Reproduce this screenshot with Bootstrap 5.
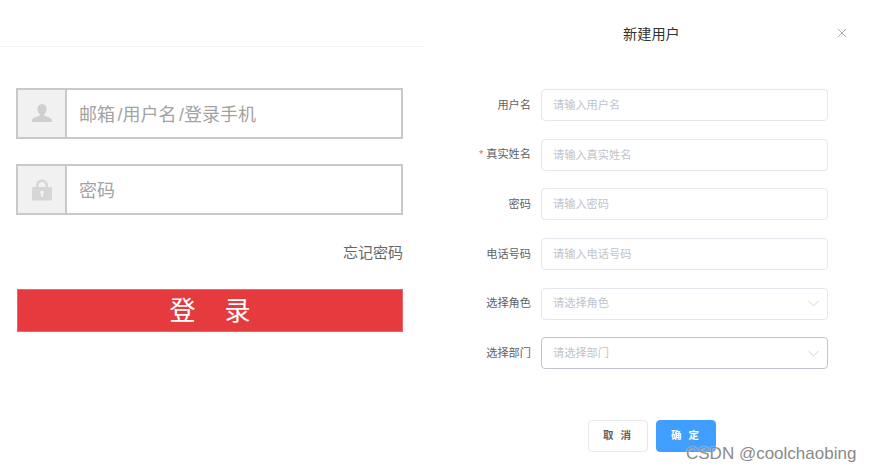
<!DOCTYPE html>
<html lang="zh-CN">
<head>
  <meta charset="UTF-8">
  <title>登录 / 新建用户</title>
  <link href="https://cdn.jsdelivr.net/npm/bootstrap@5.3.3/dist/css/bootstrap.min.css" rel="stylesheet">
  <style>
    html, body { height: 473px; overflow: hidden; }
    body { background: #fff; font-family: "Liberation Sans", "Noto Sans CJK SC", sans-serif; }
    .shot { height: 473px; }
    .login-side { width: 424px; flex: none; }
    .login-top { height: 47px; border-bottom: 1px solid #f4f4f4; }
    .login-form { padding: 41px 21px 0 16px; }
    .login-group { height: 51px; margin-bottom: 25px; border: 2px solid #c9c9c9; }
    .login-ico { width: 49px; flex: none; background: #f1f1f1; border-right: 2px solid #c9c9c9; }
    .login-group .form-control { border: 0; border-radius: 0; padding: 3px 12px 0 12px; font-size: 18px; word-spacing: -2.5px; box-shadow: none; }
    .login-group .form-control::placeholder { color: #a3a3a3; }
    .forgot { font-size: 15px; line-height: 22px; color: #666; padding-top: 2px; }
    .login-btn { display: block; width: 386px; height: 43px; margin: 25px 0 0 1px; padding: 0; background: #e53a3e; border: 1px solid #ea6468; border-radius: 0; color: #fff; font-size: 26px; line-height: 40px; word-spacing: 22px; }
    .login-btn:hover { background: #e53a3e; color: #fff; }

    .dialog-side { position: relative; }
    .dialog-title { height: 89px; padding-left: 199px; padding-top: 23px; font-size: 14.2px; line-height: 22px; color: #303133; }
    .dialog-close { position: absolute; left: 413px; top: 28px; width: 10px; height: 10px; padding: 0; border: 0; background: none; display: block; }
    .user-row { height: 32px; margin-bottom: 17.7px; padding-left: 41px; }
    .user-label { width: 66px; flex: none; padding-right: 0; text-align: right; font-size: 11.2px; color: #606266; margin-right: 10px; }
    .req { color: #f56c6c; margin-right: 3px; }
    .user-row .form-control, .user-row .form-select { width: 287px; flex: none; height: 32px; min-height: 0; padding: 0 11px; font-size: 11.2px; color: #c0c4cc; border: 1px solid #e4e7ed; border-radius: 4px; box-shadow: none; }
    .user-row .form-control::placeholder { color: #c0c4cc; }
    .user-row .form-select { background-image: url("data:image/svg+xml,%3csvg xmlns='http://www.w3.org/2000/svg' viewBox='0 0 10 6'%3e%3cpath fill='none' stroke='%23c0c4cc' stroke-width='.7' d='M.5.7 5 5.2 9.500.7'/%3e%3c/svg%3e"); background-size: 11px 7px; background-position: right 8px center; }
    .user-row .picked { border-color: #c0c4cc; }
    .dialog-foot { padding: 33px 0 0 164px; gap: 8px; }
    .foot-btn { width: 60px; height: 32px; padding: 0; font-size: 10.5px; font-weight: 700; border-radius: 4px; letter-spacing: 2px; }
    .foot-cancel { background: #fff; border: 1px solid #e4e7ed; color: #606266; }
    .foot-ok { background: #409eff; border: 1px solid #409eff; color: #fff; }
    .watermark { position: absolute; left: 686px; top: 443px; font-size: 17px; line-height: 22px; color: #8a8a8a; text-shadow: 0 0 2px #fff; }
  </style>
</head>
<body>

<div class="shot d-flex">
  <div class="login-side">
    <div class="login-top"></div>
    <form class="login-form">
      <div class="login-group d-flex">
        <div class="login-ico d-flex align-items-center justify-content-center">
          <svg width="20" height="20" viewBox="0 0 20 20"><path fill="#cfcfcf" d="M10 0c3 0 4.600 2.200 4.600 5 0 2.200-1 4.200-2.400 5.300v1.500c2.800.8 6 1.800 7.300 3.200.5.600.5 2 .5 3H0c0-1 0-2.400.5-3 1.300-1.400 4.500-2.400 7.300-3.200v-1.500C6.400 9.200 5.400 7.200 5.400 5 5.400 2.200 7 0 10 0z"/></svg>
        </div>
        <input class="form-control" type="text" placeholder="邮箱 /用户名 /登录手机">
      </div>
      <div class="login-group d-flex">
        <div class="login-ico d-flex align-items-center justify-content-center">
          <svg width="20" height="22" viewBox="0 0 20 22"><path fill="#d6d6d6" fill-rule="evenodd" d="M4 8V6.500C4 3 6.500.5 10 .5s6 2.500 6 6V8h2.500c.8 0 1.500.7 1.500 1.500V20c0 .8-.7 1.500-1.500 1.500h-17C.7 21.500 0 20.800 0 20V9.500C0 8.700.7 8 1.500 8zm2.500 0h7V6.500c0-2-1.500-3.500-3.500-3.500S6.500 4.500 6.500 6.500zM10 11.500a2 2 0 0 0-1 3.700V18h2v-2.800a2 2 0 0 0-1-3.700z"/></svg>
        </div>
        <input class="form-control" type="password" placeholder="密码">
      </div>
      <div class="forgot text-end">忘记密码</div>
      <button class="btn login-btn" type="button">登 录</button>
    </form>
  </div>

  <div class="dialog-side flex-grow-1">
    <div class="dialog-title">新建用户</div>
    <button class="dialog-close" type="button" aria-label="关闭">
      <svg class="d-block" width="10" height="10" viewBox="0 0 10 10"><path stroke="#a8abb2" stroke-width="1" d="M1 1l8 8M9 1l-8 8"/></svg>
    </button>
    <form>
      <div class="user-row d-flex align-items-center">
        <label class="user-label">用户名</label>
        <input class="form-control" type="text" placeholder="请输入用户名">
      </div>
      <div class="user-row d-flex align-items-center">
        <label class="user-label"><span class="req">*</span>真实姓名</label>
        <input class="form-control" type="text" placeholder="请输入真实姓名">
      </div>
      <div class="user-row d-flex align-items-center">
        <label class="user-label">密码</label>
        <input class="form-control" type="text" placeholder="请输入密码">
      </div>
      <div class="user-row d-flex align-items-center">
        <label class="user-label">电话号码</label>
        <input class="form-control" type="text" placeholder="请输入电话号码">
      </div>
      <div class="user-row d-flex align-items-center">
        <label class="user-label">选择角色</label>
        <select class="form-select"><option>请选择角色</option></select>
      </div>
      <div class="user-row d-flex align-items-center">
        <label class="user-label">选择部门</label>
        <select class="form-select picked"><option>请选择部门</option></select>
      </div>
      <div class="dialog-foot d-flex">
        <button class="btn foot-btn foot-cancel" type="button">取 消</button>
        <button class="btn foot-btn foot-ok" type="button">确 定</button>
      </div>
    </form>
  </div>
</div>

<div class="watermark">CSDN @coolchaobing</div>

<script src="https://cdn.jsdelivr.net/npm/bootstrap@5.3.3/dist/js/bootstrap.bundle.min.js"></script>
</body>
</html>
